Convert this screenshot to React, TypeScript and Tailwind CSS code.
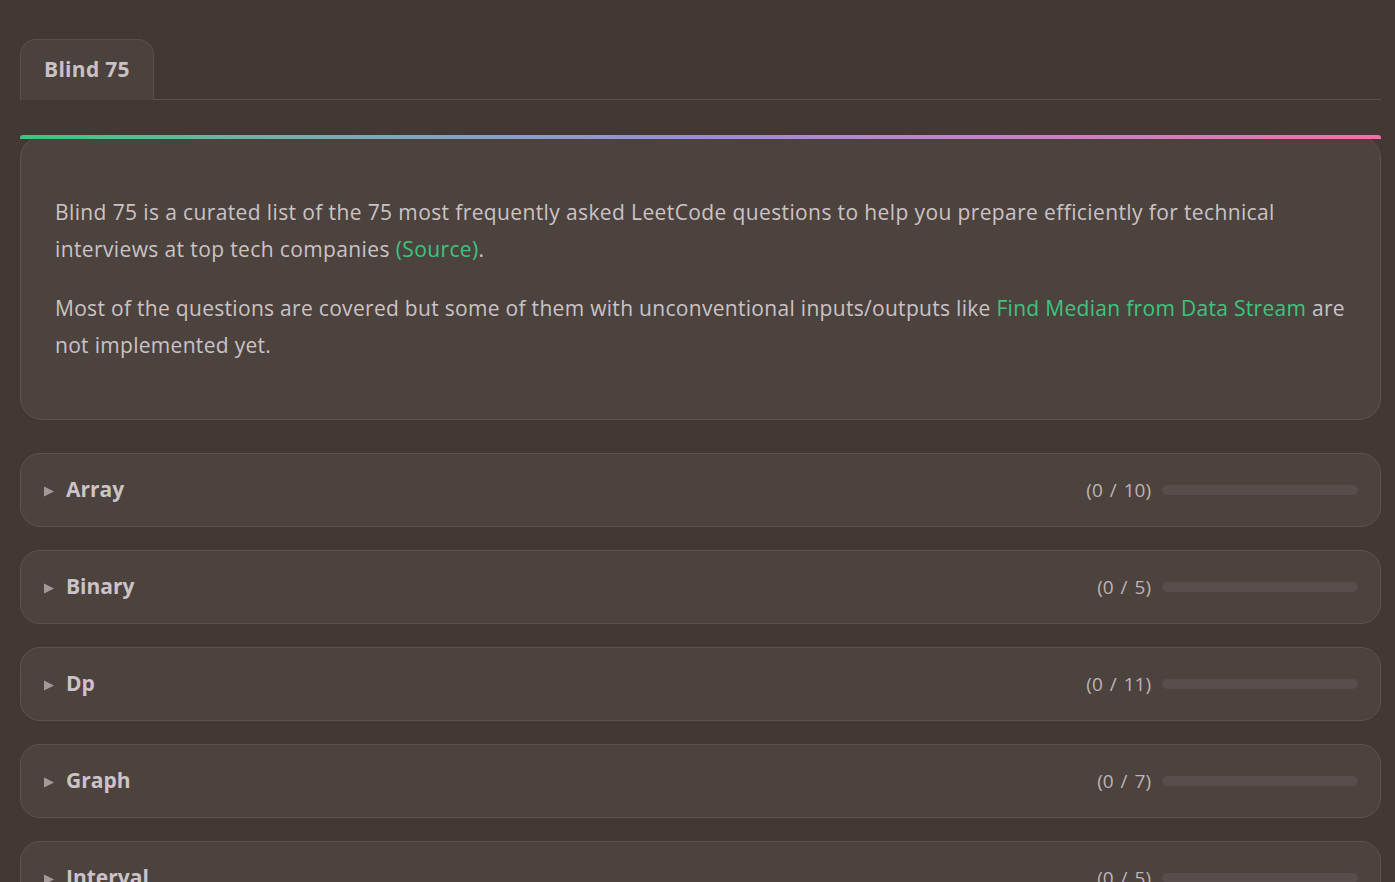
import React from "react";

const items = [
  { name: "Array", done: 0, total: 10 },
  { name: "Binary", done: 0, total: 5 },
  { name: "Dp", done: 0, total: 11 },
  { name: "Graph", done: 0, total: 7 },
  { name: "Interval", done: 0, total: 5 },
  { name: "Linked List", done: 0, total: 6 },
];

export default function App() {
  return (
    <div
      className="min-h-screen w-full bg-[#433834] text-[#cbc3c5] pl-[20px] pr-[14px] pt-[39px] pb-10"
      style={{ fontFamily: '"Open Sans", "Noto Sans", sans-serif' }}
    >
      {/* Tabs */}
      <div className="flex border-b border-[#5b504c]">
        <div className="h-[61px] px-[23px] flex items-center rounded-t-[16px] border border-b-0 border-[#5b504c] bg-[#4b413d] text-[21px] tracking-[0.3px] font-bold text-[#c9c1c6] -mb-px">
          Blind 75
        </div>
      </div>

      {/* Intro card */}
      <div className="relative mt-[36px] rounded-[22px] border border-[#5d5350] bg-[#4c423e] pl-[34px] pr-[26px] pt-[57px] pb-[55px] text-[21px] leading-[37px] text-[#cbc3c5]">
        <div className="absolute left-[-1px] right-[-1px] top-[-2px] h-[4px] rounded-t-[3px] bg-gradient-to-r from-[#3ec47f] via-[#9b8ae0] to-[#f26fa6]" />
        <p className="tracking-[0.38px]">
          Blind 75 is a curated list of the 75 most frequently asked LeetCode questions to help you prepare efficiently for technical interviews at top tech companies{" "}
          <span className="text-[#3ec47f]">(Source)</span>.
        </p>
        <p className="mt-[22px] tracking-[0.3px]">
          Most of the questions are covered but some of them with unconventional inputs/outputs like{" "}
          <span className="text-[#3ec47f]">Find Median from Data Stream</span> are not implemented yet.
        </p>
      </div>

      {/* Accordion */}
      <div className="mt-[33px] flex flex-col gap-[23px]">
        {items.map((it) => (
          <div
            key={it.name}
            className="h-[74px] rounded-[20px] border border-[#5d5350] bg-[#4c423e] flex items-center pl-[22px] pr-[22px]"
          >
            <svg width="12" height="11" viewBox="0 0 12 11" className="mt-[2px]">
              <polygon points="1,0.5 11,5.5 1,10.5" fill="#a3999a" />
            </svg>
            <span className="ml-[11px] text-[21px] font-bold text-[#cbc3c7]">{it.name}</span>
            <div className="flex-1" />
            <span className="text-[19px] text-[#bdb4b5] [word-spacing:2px]">
              ({it.done} / {it.total})
            </span>
            <div className="ml-[11px] h-[10px] w-[196px] rounded-full bg-[#574d4a]" />
          </div>
        ))}
      </div>
    </div>
  );
}
